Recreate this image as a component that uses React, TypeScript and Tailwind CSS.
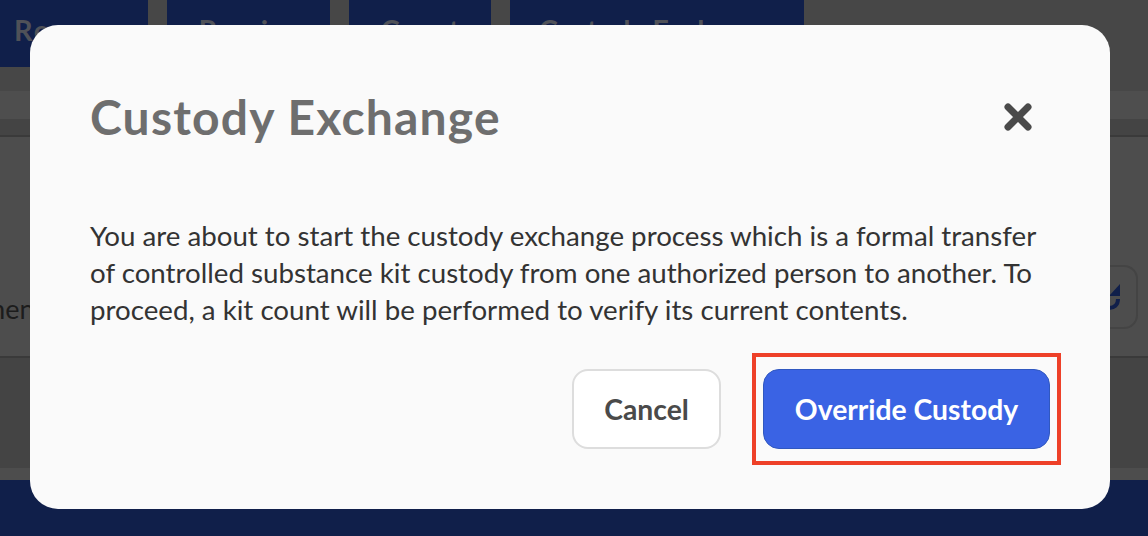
const tabs = [
  { label: 'Remove', width: 'w-[148px] justify-start pl-[14px] tracking-[2px]' },
  { label: 'Receive', width: 'w-[163px] justify-center' },
  { label: 'Count', width: 'w-[142px] justify-center' },
  { label: 'Custody Exchange', width: 'w-[294px] justify-center' },
];

export default function App() {
  return (
    <div className="relative h-[536px] w-[1148px] overflow-hidden bg-[#474747] font-['Lato',sans-serif]">
      {/* Page behind the dialog */}
      <div className="flex h-full flex-col">
        <div className="flex h-[67px] gap-[19px]">
          {tabs.map((tab) => (
            <div
              key={tab.label}
              className={`${tab.width} flex items-center bg-[#101f4a] pb-[7px] text-[29px] font-bold text-[#4f5158]`}
            >
              {tab.label}
            </div>
          ))}
        </div>
        <div className="h-[24px] bg-[#474747]" />
        <div className="h-[28px] bg-[#4e4e4e]" />
        <div className="h-[18px] border-b-2 border-[#3a3a3a] bg-[#444444]" />
        <div className="flex h-[221px] items-center border-b-2 border-[#3a3a3a] bg-[#4d4d4d] pt-[126px]">
          <span className="-ml-[68px] text-[27px] text-[#1c1c1c]">Shipment</span>
        </div>
        <div className="h-[110px] bg-[#444444]" />
        <div className="h-[12px] bg-[#4d4d4d]" />
        <div className="flex-1 bg-[#101f4a]" />
      </div>

      {/* Refresh button peeking out to the right of the dialog */}
      <div className="absolute left-[1090px] top-[265px] flex h-[64px] w-[48px] items-center justify-end rounded-[14px] border-2 border-[#444444] pr-[10px]">
        <svg viewBox="0 0 30 30" className="h-[30px] w-[30px]" fill="none">
          <path d="M24 2 V14 H13 Z" fill="#101f4a" />
          <path d="M22 17 C22 23 18 26 13 26" stroke="#101f4a" strokeWidth="4" />
        </svg>
      </div>

      {/* Dialog */}
      <div className="absolute left-[30px] top-[25px] flex h-[484px] w-[1080px] flex-col rounded-[28px] bg-[#fafafa] px-[60px]">
        <div className="mt-[62px] flex items-center justify-between">
          <h2 className="text-[48px] font-bold leading-[60px] tracking-[1.2px] text-[#6e6e6e]">Custody Exchange</h2>
          <svg viewBox="0 0 28 28" className="mr-[18px] h-[28px] w-[28px]" fill="none">
            <path d="M4 4 L24 24 M24 4 L4 24" stroke="#4a4a4a" strokeWidth="7" strokeLinecap="round" />
          </svg>
        </div>
        <p className="mt-[70px] w-[960px] text-[27.7px] leading-[37px] text-[#333333]">
          You are about to start the custody exchange process which is a formal transfer of controlled substance kit
          custody from one authorized person to another. To proceed, a kit count will be performed to verify its
          current contents.
        </p>
        <div className="mt-[41px] flex justify-end gap-[42px]">
          <button className="h-[80px] w-[149px] rounded-[16px] border-2 border-[#dddddd] bg-white text-[28.3px] font-bold text-[#4a4a4a]">
            Cancel
          </button>
          <div className="relative">
            <button className="h-[80px] w-[287px] rounded-[16px] border border-[#3058c0] bg-[#3a63e4] text-[28.3px] font-bold text-white">
              Override Custody
            </button>
            {/* Red highlight drawn over the primary button */}
            <div className="absolute -inset-x-[11px] -inset-y-[16px] border-4 border-[#ee4028]" />
          </div>
        </div>
      </div>
    </div>
  );
}
